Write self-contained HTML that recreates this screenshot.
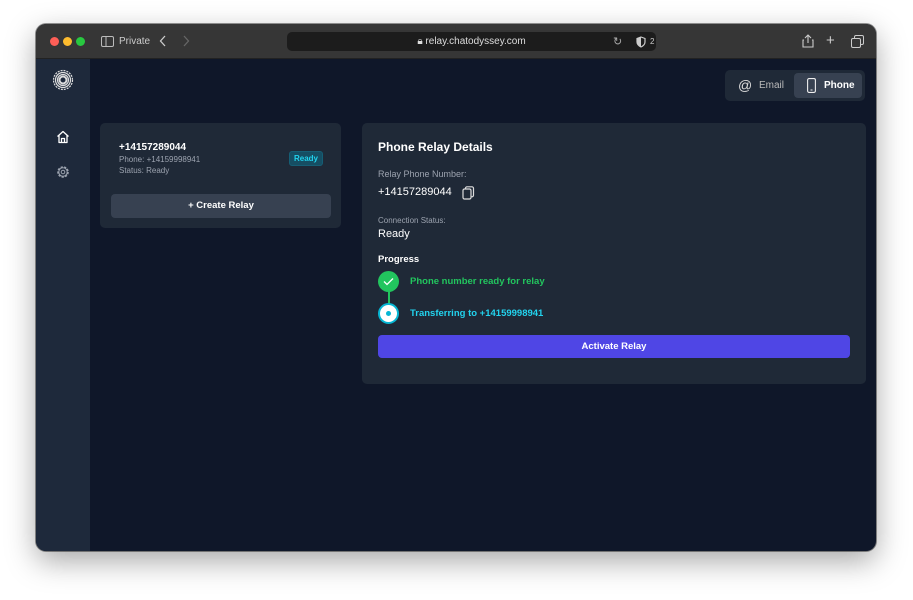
<!DOCTYPE html>
<html><head><meta charset="utf-8"><style>
*{margin:0;padding:0;box-sizing:border-box}
body{width:913px;height:600px;background:#fff;font-family:"Liberation Sans",sans-serif;position:relative;overflow:hidden}
.win{position:absolute;left:36px;top:24px;width:840px;height:527px;border-radius:10px;overflow:hidden;box-shadow:0 10px 30px rgba(0,0,0,.35),0 0 0 1px rgba(0,0,0,.4);background:#0f1729}
.tb{position:absolute;left:0;top:0;width:840px;height:35px;background:#363636;border-bottom:1px solid #222}
.dot{position:absolute;top:13px;width:9px;height:9px;border-radius:50%}
.url{position:absolute;left:251px;top:8px;width:369px;height:19px;background:#1c1c1c;border-radius:5px;color:#ddd;font-size:10px;text-align:center;line-height:19px}
.side{position:absolute;left:0;top:35px;width:54px;height:492px;background:#1e293b}
.card{position:absolute;background:#1f2937;border-radius:5px}
.t{position:absolute;white-space:nowrap}
</style></head><body>
<div class="win">
 <div class="tb">
  <div class="dot" style="left:14px;background:#fe5f57"></div>
  <div class="dot" style="left:27px;background:#febc2e"></div>
  <div class="dot" style="left:40px;background:#28c840"></div>
  <svg style="position:absolute;left:65px;top:12px" width="13" height="11"><rect x=".5" y=".5" width="12" height="10" rx="1.5" fill="none" stroke="#bbb"/><line x1="5" y1="1" x2="5" y2="10" stroke="#bbb"/></svg>
  <div class="t" style="left:83px;top:12px;color:#ccc;font-size:10px">Private</div>
  <svg style="position:absolute;left:123px;top:11px" width="8" height="12"><path d="M6 1L1.5 6L6 11" fill="none" stroke="#ccc" stroke-width="1.3"/></svg>
  <svg style="position:absolute;left:146px;top:11px" width="8" height="12"><path d="M2 1L6.5 6L2 11" fill="none" stroke="#666" stroke-width="1.3"/></svg>
  <div class="url">🔒︎ relay.chatodyssey.com</div>
  <div class="t" style="left:577px;top:11px;color:#aaa;font-size:11px">↻</div>
  <svg style="position:absolute;left:600px;top:12px" width="10" height="12"><path d="M5 1L9 2.5V6C9 8.5 7 10 5 11C3 10 1 8.5 1 6V2.5Z" fill="none" stroke="#ccc" stroke-width="1.2"/><path d="M5 1V11C3 10 1 8.5 1 6V2.5Z" fill="#ccc"/></svg>
  <div class="t" style="left:614px;top:13px;color:#ccc;font-size:8px">2</div>
  <svg style="position:absolute;left:766px;top:10px" width="12" height="14"><path d="M6 1V9M3 4L6 1L9 4M2 6H1V13H11V6H10" fill="none" stroke="#ccc" stroke-width="1.1"/></svg>
  <div class="t" style="left:790px;top:8px;color:#ccc;font-size:15px">+</div>
  <svg style="position:absolute;left:815px;top:11px" width="13" height="13"><rect x="3.5" y=".5" width="9" height="9" rx="1.5" fill="none" stroke="#ccc"/><rect x=".5" y="3.5" width="9" height="9" rx="1.5" fill="#363636" stroke="#ccc"/></svg>
 </div>
 <div class="side">
  <svg style="position:absolute;left:16px;top:10px" width="22" height="22" viewBox="0 0 22 22"><g fill="none" stroke="#ddd" stroke-width="1.2"><circle cx="11" cy="11" r="9.5" stroke-dasharray="2 1"/><circle cx="11" cy="11" r="7.5"/><circle cx="11" cy="11" r="5.5"/><circle cx="11" cy="11" r="3.5" stroke-width="2"/></g></svg>
  <svg style="position:absolute;left:20px;top:71px" width="14" height="14" viewBox="0 0 14 14"><path d="M1.5 6.5L7 1.5L12.5 6.5M3 5.5V12.5H11V5.5M5.5 12.5V8.5H8.5V12.5" fill="none" stroke="#fff" stroke-width="1.3" stroke-linejoin="round"/></svg>
  <svg style="position:absolute;left:20px;top:106px" width="14" height="14" viewBox="0 0 14 14"><circle cx="7" cy="7" r="5" fill="none" stroke="#9ca3af" stroke-width="1.6" stroke-dasharray="2.2 1.3"/><circle cx="7" cy="7" r="4.2" fill="none" stroke="#9ca3af" stroke-width="1"/><circle cx="7" cy="7" r="1.8" fill="none" stroke="#9ca3af" stroke-width="1"/></svg>
 </div>
 <!-- toggle -->
 <div class="card" style="left:689px;top:46px;width:140px;height:31px;background:#1f2937;border-radius:5px"></div>
 <div class="card" style="left:758px;top:49px;width:68px;height:25px;background:#374151;border-radius:4px"></div>
 <div class="t" style="left:702px;top:53px;color:#ddd;font-size:14px">@</div>
 <div class="t" style="left:723px;top:56px;color:#bbb;font-size:10px">Email</div>
 <svg style="position:absolute;left:771px;top:54px" width="9" height="15"><rect x=".6" y=".6" width="7.8" height="13.8" rx="1.5" fill="none" stroke="#eee" stroke-width="1.1"/><line x1="3.5" y1="12" x2="5.5" y2="12" stroke="#eee"/></svg>
 <div class="t" style="left:788px;top:56px;color:#fff;font-size:10px;font-weight:bold">Phone</div>
 <!-- left card -->
 <div class="card" style="left:64px;top:99px;width:241px;height:105px">
  <div class="t" style="left:19px;top:19px;color:#fff;font-size:10px;font-weight:bold">+14157289044</div>
  <div class="t" style="left:19px;top:32px;color:#9ca3af;font-size:8px">Phone: +14159998941</div>
  <div class="t" style="left:19px;top:43px;color:#9ca3af;font-size:8px">Status: Ready</div>
  <div class="t" style="left:189px;top:28px;width:34px;height:15px;border:1px solid #155e75;background:#164e63;border-radius:3px;color:#22d3ee;font-size:8px;font-weight:bold;text-align:center;line-height:13px">Ready</div>
  <div class="t" style="left:11px;top:71px;width:220px;height:24px;background:#374151;border-radius:4px;color:#fff;font-size:9.5px;font-weight:bold;text-align:center;line-height:24px">+ Create Relay</div>
 </div>
 <!-- right card -->
 <div class="card" style="left:326px;top:99px;width:504px;height:261px">
  <div class="t" style="left:16px;top:17px;color:#fff;font-size:12px;font-weight:bold">Phone Relay Details</div>
  <div class="t" style="left:16px;top:46px;color:#9ca3af;font-size:9px">Relay Phone Number:</div>
  <div class="t" style="left:16px;top:63px;color:#fff;font-size:11px">+14157289044</div>
  <svg style="position:absolute;left:100px;top:63px" width="13" height="14"><rect x="3.5" y=".8" width="8" height="10" rx="1.5" fill="none" stroke="#ddd" stroke-width="1.2"/><rect x="1" y="3" width="8" height="10" rx="1.5" fill="#1f2937" stroke="#ddd" stroke-width="1.2"/></svg>
  <div class="t" style="left:16px;top:93px;color:#9ca3af;font-size:8px">Connection Status:</div>
  <div class="t" style="left:16px;top:105px;color:#fff;font-size:11px">Ready</div>
  <div class="t" style="left:16px;top:131px;color:#fff;font-size:9.5px;font-weight:bold">Progress</div>
  <div style="position:absolute;left:26px;top:160px;width:1.5px;height:26px;background:#22c55e"></div>
  <div style="position:absolute;left:16px;top:148px;width:21px;height:21px;border-radius:50%;background:#22c55e"></div>
  <svg style="position:absolute;left:21px;top:154px" width="11" height="9"><path d="M1 4.5L4 7.5L10 1.5" fill="none" stroke="#fff" stroke-width="1.3"/></svg>
  <div class="t" style="left:48px;top:153px;color:#22c55e;font-size:9.5px;font-weight:bold">Phone number ready for relay</div>
  <div style="position:absolute;left:16px;top:180px;width:21px;height:21px;border-radius:50%;background:#fff;border:2px solid #06b6d4"></div>
  <div style="position:absolute;left:24px;top:188px;width:5px;height:5px;border-radius:50%;background:#06b6d4"></div>
  <div class="t" style="left:48px;top:185px;color:#22d3ee;font-size:9.5px;font-weight:bold">Transferring to +14159998941</div>
  <div class="t" style="left:16px;top:212px;width:472px;height:23px;background:#4f46e5;border-radius:4px;color:#fff;font-size:9.5px;font-weight:bold;text-align:center;line-height:23px">Activate Relay</div>
 </div>
</div>
</body></html>
